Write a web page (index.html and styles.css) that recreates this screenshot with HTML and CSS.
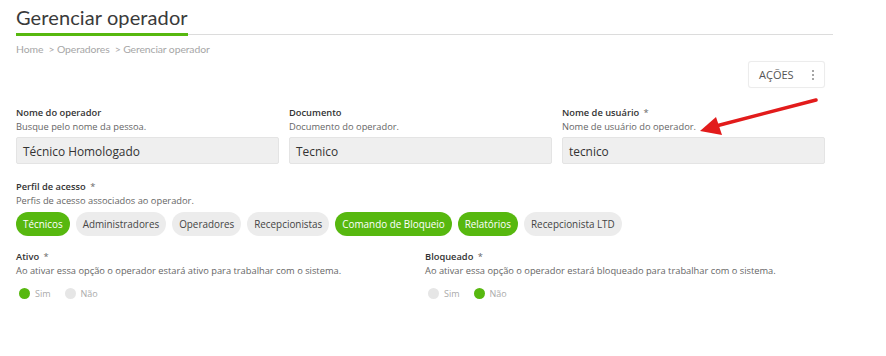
FILE: index.html
```html
<!DOCTYPE html>
<html lang="pt">
<head>
<meta charset="utf-8">
<link rel="stylesheet" href="styles.css">
</head>
<body>
<div class="page">
  <header class="head">
    <h1 class="title">Gerenciar operador</h1>
    <div class="rule"><span class="rule-accent"></span></div>
    <nav class="crumbs">Home &nbsp;&gt; Operadores &nbsp;&gt; Gerenciar operador</nav>
  </header>
  <div class="toolbar">
    <button class="actions">AÇÕES <span class="dots"><i></i><i></i><i></i></span></button>
  </div>
  <div class="fields">
    <div class="field">
      <div class="label">Nome do operador</div>
      <div class="desc">Busque pelo nome da pessoa.</div>
      <div class="input">Técnico Homologado</div>
    </div>
    <div class="field">
      <div class="label">Documento</div>
      <div class="desc">Documento do operador.</div>
      <div class="input">Tecnico</div>
    </div>
    <div class="field">
      <div class="label">Nome de usuário <span class="req">*</span></div>
      <div class="desc">Nome de usuário do operador.</div>
      <div class="input">tecnico</div>
    </div>
  </div>
  <div class="group">
    <div class="label">Perfil de acesso <span class="req">*</span></div>
    <div class="desc">Perfis de acesso associados ao operador.</div>
    <div class="chips">
      <span class="chip on">Técnicos</span>
      <span class="chip">Administradores</span>
      <span class="chip">Operadores</span>
      <span class="chip">Recepcionistas</span>
      <span class="chip on">Comando de Bloqueio</span>
      <span class="chip on">Relatórios</span>
      <span class="chip">Recepcionista LTD</span>
    </div>
  </div>
  <div class="toggles">
    <div class="toggle">
      <div class="label">Ativo <span class="req">*</span></div>
      <div class="desc">Ao ativar essa opção o operador estará ativo para trabalhar com o sistema.</div>
      <div class="radios">
        <span class="radio"><span class="dot on"></span>Sim</span>
        <span class="radio"><span class="dot"></span>Não</span>
      </div>
    </div>
    <div class="toggle">
      <div class="label">Bloqueado <span class="req">*</span></div>
      <div class="desc">Ao ativar essa opção o operador estará bloqueado para trabalhar com o sistema.</div>
      <div class="radios">
        <span class="radio"><span class="dot"></span>Sim</span>
        <span class="radio"><span class="dot on"></span>Não</span>
      </div>
    </div>
  </div>
  <svg class="arrow" width="886" height="356" viewBox="0 0 886 356">
    <line x1="816" y1="100" x2="716" y2="126" stroke="#e21b1b" stroke-width="3.5" stroke-linecap="round"/>
    <polygon points="700,131 716,117 722,135" fill="#e21b1b"/>
  </svg>
</div>
</body>
</html>
```
FILE: styles.css
```css
* { box-sizing: border-box; }
html, body { margin: 0; padding: 0; background: #fff; }
body { font-family: "Open Sans", "Noto Sans", sans-serif; color: #333; }
.page { position: relative; width: 886px; height: 356px; padding: 0 61px 0 16px; }
.head { padding-top: 4px; }
.title { margin: 0; font-family: "Lato", "Open Sans", sans-serif; font-weight: 400; font-size: 20px; line-height: 26px; color: #3a3a3a; letter-spacing: 0.1px; }
.rule { margin-top: 3px; height: 3px; position: relative; width: 817px; }
.rule::before { content: ""; position: absolute; left: 0; right: 0; top: 1px; height: 1px; background: #dcdcdc; }
.rule-accent { position: absolute; left: 0; top: 0; width: 172px; height: 3px; background: #57b80f; }
.crumbs { margin-top: 6px; font-family: "Lato", sans-serif; font-size: 10.4px; color: #a6a6a6; line-height: 14px; letter-spacing: -0.1px; }
.toolbar { display: flex; justify-content: flex-end; margin-top: 5px; }
.actions { width: 77px; height: 27px; border: 1px solid #ececec; border-radius: 3px; background: #fff; font-family: "Open Sans", sans-serif; font-size: 11px; color: #555; display: flex; align-items: center; justify-content: space-between; padding: 0 10px 0 10px; box-shadow: 0 0 1px rgba(0,0,0,0.05); }
.dots { display: flex; flex-direction: column; gap: 2px; }
.dots i { width: 2px; height: 2px; background: #888; border-radius: 1px; }
.fields { display: grid; grid-template-columns: 263px 263px 263px; column-gap: 10px; margin-top: 18px; }
.label { font-size: 9.3px; font-weight: 600; color: #333; line-height: 14px; }
.req { color: #666; font-weight: 400; margin-left: 2px; }
.desc { font-size: 9.3px; color: #666; line-height: 14px; }
.input { margin-top: 3px; height: 27px; background: #efefef; border: 1px solid #e4e4e4; border-radius: 2px; font-size: 11.9px; color: #333; padding: 0 6px; display: flex; align-items: center; }
.group { margin-top: 16px; }
.chips { display: flex; gap: 6px; margin-top: 4px; }
.chip { height: 24px; border-radius: 12px; background: #ececec; color: #444; font-size: 9.9px; padding: 0 7px; display: flex; align-items: center; }
.chip.on { background: #57b80f; color: #fff; }
.toggles { display: grid; grid-template-columns: 409px 400px; margin-top: 14px; }
.radios { display: flex; gap: 11px; margin-top: 9px; align-items: center; }
.radio { display: flex; align-items: center; gap: 5px; font-size: 9px; color: #aaa; }
.dot { width: 11px; height: 11px; border-radius: 50%; background: #e6e6e6; margin-left: 3px; }
.dot.on { background: #57b80f; }
.arrow { position: absolute; left: 0; top: 0; pointer-events: none; }
```
